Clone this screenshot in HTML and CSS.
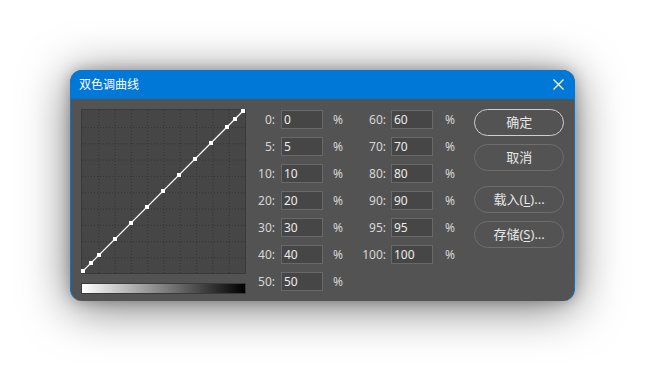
FILE: index.html
```html
<!DOCTYPE html>
<html lang="zh">
<head>
<meta charset="utf-8">
<title>双色调曲线</title>
<link rel="stylesheet" href="styles.css">
</head>
<body>
<div class="stage">
  <div class="window">
    <div class="titlebar">
      <span class="title">双色调曲线</span>
      <svg class="close" width="11" height="11" viewBox="0 0 11 11"><path d="M0.5 0.5 L10.5 10.5 M10.5 0.5 L0.5 10.5" stroke="#fff" stroke-width="1.2" fill="none"/></svg>
    </div>
    <div class="content">
      <div class="graph-col">
        <div class="graph">
          <svg width="163" height="163" viewBox="0 0 163 163">
            <g stroke="#333" stroke-width="1" stroke-dasharray="1 2" fill="none">
              <path d="M16.8 0V163M33.1 0V163M49.4 0V163M65.7 0V163M82 0V163M98.3 0V163M114.6 0V163M130.9 0V163M147.2 0V163"/>
              <path d="M0 17.5H163M0 33.8H163M0 50.1H163M0 66.4H163M0 82.7H163M0 99H163M0 115.3H163M0 131.6H163M0 147.9H163"/>
            </g>
            <path d="M1 161 L161 1" stroke="#fff" stroke-width="1.2"/>
            <g fill="#fff">
              <rect x="-1" y="159" width="4" height="4"/>
              <rect x="7" y="151" width="4" height="4"/>
              <rect x="15" y="143" width="4" height="4"/>
              <rect x="31" y="127" width="4" height="4"/>
              <rect x="47" y="111" width="4" height="4"/>
              <rect x="63" y="95" width="4" height="4"/>
              <rect x="79" y="79" width="4" height="4"/>
              <rect x="95" y="63" width="4" height="4"/>
              <rect x="111" y="47" width="4" height="4"/>
              <rect x="127" y="31" width="4" height="4"/>
              <rect x="143" y="15" width="4" height="4"/>
              <rect x="151" y="7" width="4" height="4"/>
              <rect x="159" y="-1" width="4" height="4"/>
            </g>
          </svg>
        </div>
        <div class="ramp"></div>
      </div>
      <div class="fields">
        <span class="lbl">0:</span><span class="inp">0</span><span class="pct">%</span>
        <span class="lbl2">60:</span><span class="inp">60</span><span class="pct2">%</span>
        <span class="lbl">5:</span><span class="inp">5</span><span class="pct">%</span>
        <span class="lbl2">70:</span><span class="inp">70</span><span class="pct2">%</span>
        <span class="lbl">10:</span><span class="inp">10</span><span class="pct">%</span>
        <span class="lbl2">80:</span><span class="inp">80</span><span class="pct2">%</span>
        <span class="lbl">20:</span><span class="inp">20</span><span class="pct">%</span>
        <span class="lbl2">90:</span><span class="inp">90</span><span class="pct2">%</span>
        <span class="lbl">30:</span><span class="inp">30</span><span class="pct">%</span>
        <span class="lbl2">95:</span><span class="inp">95</span><span class="pct2">%</span>
        <span class="lbl">40:</span><span class="inp">40</span><span class="pct">%</span>
        <span class="lbl2">100:</span><span class="inp">100</span><span class="pct2">%</span>
        <span class="lbl">50:</span><span class="inp">50</span><span class="pct">%</span>
      </div>
      <div class="buttons">
        <div class="btn primary">确定</div>
        <div class="btn">取消</div>
        <div class="btn spaced">载入(<u>L</u>)...</div>
        <div class="btn">存储(<u>S</u>)...</div>
      </div>
    </div>
  </div>
</div>
</body>
</html>
```
FILE: styles.css
```css
* { box-sizing: border-box; }
html, body { margin: 0; padding: 0; background: #ffffff; }
body {
  width: 645px;
  height: 372px;
  overflow: hidden;
  font-family: "Noto Sans", "Noto Sans CJK SC", sans-serif;
  font-size: 12px;
}
.stage {
  padding: 70px 0 0 70px;
}
.window {
  width: 505px;
  height: 231px;
  border-radius: 12px;
  overflow: hidden;
  background: #535353;
  border-left: 1px solid #0078d7;
  border-right: 1px solid #0078d7;
  box-shadow: 0 6px 48px rgba(0, 0, 0, 0.55), 0 0 14px rgba(0, 0, 0, 0.25);
  display: flex;
  flex-direction: column;
}
.titlebar {
  height: 29px;
  background: #0078d7;
  display: flex;
  align-items: center;
  justify-content: space-between;
  padding: 0 10px 0 8px;
  color: #fff;
}
.title {
  font-size: 12px;
  line-height: 1;
}
.close { display: block; }
.content {
  flex: 1;
  display: flex;
  padding: 10px 10px 0 10px;
}
.graph-col {
  width: 165px;
  display: flex;
  flex-direction: column;
  gap: 9px;
}
.graph {
  width: 165px;
  height: 165px;
  background: #464646;
  border: 1px solid #3a3a3a;
}
.graph svg { display: block; overflow: visible; }
.ramp {
  width: 165px;
  height: 11px;
  border: 1px solid #3a3a3a;
  background: linear-gradient(to right, #ffffff, #000000);
}
.fields {
  width: 228px;
  margin-top: 1px;
  margin-left: 1px;
  display: grid;
  grid-template-columns: 34px 42px 32px 36px 42px 1fr;
  grid-auto-rows: 19px;
  row-gap: 8px;
  align-content: start;
  color: #d6d6d6;
}
.lbl, .lbl2 {
  text-align: right;
  line-height: 19px;
}
.lbl { padding-right: 6px; }
.lbl2 { padding-right: 5px; }
.pct, .pct2 {
  line-height: 19px;
}
.pct { padding-left: 10px; }
.pct2 { padding-left: 12px; }
.inp {
  height: 19px;
  border: 1px solid #696969;
  background: #464646;
  color: #ececec;
  line-height: 17px;
  padding-left: 2px;
}
.buttons {
  width: 90px;
  display: flex;
  flex-direction: column;
  gap: 8px;
}
.btn {
  height: 27px;
  border-radius: 14px;
  border: 1px solid #6e6e6e;
  color: #e6e6e6;
  font-size: 13px;
  display: flex;
  align-items: center;
  justify-content: center;
  line-height: 1;
}
.btn.primary { border-color: #cfcfcf; }
.btn.spaced { margin-top: 7px; }
.btn u { text-underline-offset: 2px; }
```
